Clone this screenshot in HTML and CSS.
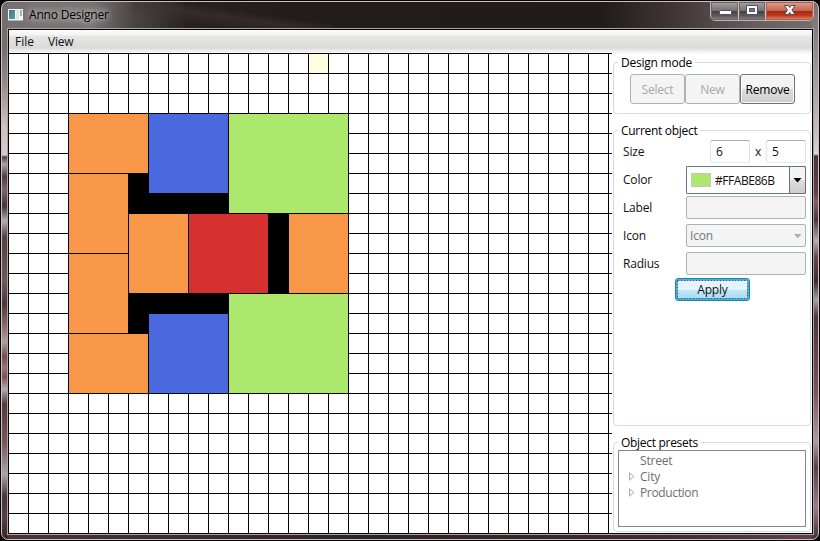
FILE: index.html
```html
<!DOCTYPE html>
<html lang="en">
<head>
<meta charset="utf-8">
<title>Anno Designer</title>
<link rel="stylesheet" href="styles.css">
</head>
<body>
<div class="window">
  <header class="titlebar">
    <svg class="app-icon" width="15" height="12" viewBox="0 0 15 12">
      <defs><linearGradient id="ic" x1="0" y1="0" x2="1" y2="1"><stop offset="0" stop-color="#4a6fa8"/><stop offset="1" stop-color="#4fa583"/></linearGradient></defs>
      <rect width="15" height="12" fill="#f4f6f6"/><rect x="1" y="1" width="6" height="9" fill="url(#ic)"/><rect x="8" y="1" width="3" height="9" fill="#dfe5e6"/><rect x="12" y="1" width="2" height="6" fill="#91bfae"/><path d="M0 11.5H15" stroke="#a8b3b8"/>
    </svg>
    <span class="title">Anno Designer</span>
    <div class="controls">
      <span class="ctl min"><svg width="28" height="18"><rect x="8.500" y="8.500" width="12" height="4" rx="1" fill="#fff" stroke="#4c5067"/></svg></span>
      <span class="ctl max"><svg width="26" height="18"><path fill-rule="evenodd" d="M7.500 3.500H18.500V12.500H7.500ZM10.500 6.500V9.500H15.500V6.500Z" fill="#fff" stroke="#4c5067"/></svg></span>
      <span class="ctl close"><svg width="47" height="18"><path d="M18.500 3.500H22.300L23.700 5.500L25.200 3.500H29L26 8L29 12.500H25.200L23.700 10.600L22.300 12.500H18.500L21.500 8Z" fill="#fff" stroke="#4c4a5c"/></svg></span>
    </div>
  </header>
  <div class="client">
    <nav class="menu"><span class="file">File</span><span class="view">View</span></nav>
    <main class="body">
      <svg class="canvas" width="604" height="480" viewBox="0 0 604 480" shape-rendering="crispEdges">
        <defs><pattern id="cells" width="20" height="20" patternUnits="userSpaceOnUse"><path d="M0 .5H20M.5 0V20" stroke="#000"/></pattern></defs>
        <rect width="604" height="480" fill="#fff"/>
        <rect x="300" width="20" height="20" fill="#ffffe0"/>
        <rect width="604" height="480" fill="url(#cells)"/>
        <path d="M120 120H140V140H220V160H120ZM260 160H280V240H260ZM120 240H220V260H140V280H120Z"/>
        <g stroke="#000" transform="translate(.5 .5)">
          <g fill="#f89748">
            <rect x="60" y="60" width="80" height="60"/><rect x="60" y="120" width="60" height="80"/><rect x="60" y="200" width="60" height="80"/><rect x="60" y="280" width="80" height="60"/><rect x="120" y="160" width="60" height="80"/><rect x="280" y="160" width="60" height="80"/>
          </g>
          <g fill="#4b69de"><rect x="140" y="60" width="80" height="80"/><rect x="140" y="260" width="80" height="80"/></g>
          <g fill="#abe86b"><rect x="220" y="60" width="120" height="100"/><rect x="220" y="240" width="120" height="100"/></g>
          <rect x="180" y="160" width="80" height="80" fill="#d63131"/>
        </g>
      </svg>
      <aside class="side">
        <fieldset class="mode"><legend>Design mode</legend>
          <div class="buttons"><button class="off" disabled>Select</button><button class="off" disabled>New</button><button class="on">Remove</button></div>
        </fieldset>
        <fieldset class="object"><legend>Current object</legend>
          <div class="rows">
            <div class="row"><label>Size</label><div class="size"><span class="field num">6</span><span class="times">x</span><span class="field num">5</span></div></div>
            <div class="row"><label>Color</label><div class="combo"><i class="swatch"></i><span class="hex">#FFABE86B</span><span class="drop"><svg width="15" height="26"><path d="M3.500 11H11.500L7.500 15.500Z"/></svg></span></div></div>
            <div class="row"><label>Label</label><span class="field off"></span></div>
            <div class="row"><label>Icon</label><span class="field off select"><span>Icon</span><svg width="8" height="5"><path d="M0 0H7.500L3.750 4.200Z" fill="#aaaeb2"/></svg></span></div>
            <div class="row"><label>Radius</label><span class="field off"></span></div>
          </div>
          <button class="apply"><svg class="focus" width="71" height="19"><rect x=".5" y=".5" width="70" height="18" fill="none" stroke="#4b5a62" stroke-dasharray="2 1"/></svg><span>Apply</span></button>
        </fieldset>
        <fieldset class="presets"><legend>Object presets</legend>
          <ul class="tree">
            <li><i></i><span class="street">Street</span></li>
            <li><i><svg width="6" height="9"><path d="M.5 .8V8.200L4.700 4.500Z" fill="#fff" stroke="#aaa"/></svg></i><span class="city">City</span></li>
            <li><i><svg width="6" height="9"><path d="M.5 .8V8.200L4.700 4.500Z" fill="#fff" stroke="#aaa"/></svg></i><span class="production">Production</span></li>
          </ul>
        </fieldset>
      </aside>
    </main>
  </div>
</div>
</body>
</html>
```
FILE: styles.css
```css
* { box-sizing: border-box; }
body { margin: 0; width: 820px; height: 541px; overflow: hidden; background: #080304; font: 12px/16px "Open Sans", "Noto Sans", sans-serif; color: #111; letter-spacing: -.2px; }
.window {
  width: 818px; height: 539px; margin: 1px; padding: 0 4px 4px 5px; border: 1px solid #c9c1c3; border-radius: 7px;
  background:
    linear-gradient(#736c6c 0, #756e6e 45px, #958784 80px, #d0c2bf 125px, #d5cbc8 153px, #583a3b 155px, #aaa3a4 162px, #543c3a 175px, #7a6669 188px, #493232 204px, #b2afb2 219px, #55403f 235px, #73585a 280px, #493839 302px, #88605e 320px, #aaa09b 340px, #754c50 355px, #a36f73 365px, #844f55 375px, #b4acae 387px, #543c3d 402px, #7c5458 440px, #aaa3ad 472px, #48343a 495px, #584047 515px, #302124 539px) left / 6px 100% no-repeat,
    linear-gradient(#756d6e 0, #999193 60px, #c7bdbe 130px, #ddd4d5 152px, #4c343a 154px, #633c45 190px, #8a5964 200px, #50343d 218px, #b4afb1 239px, #70424a 255px, #3f2c30 280px, #aaa0a4 298px, #53343d 315px, #7e505a 390px, #b09aa2 440px, #603b46 465px, #9d7a85 505px, #3e2a30 539px) right / 6px 100% no-repeat,
    linear-gradient(90deg, #4a343a, #2e2224 45%, #402a2d 80%, #634049) bottom / 100% 6px no-repeat,
    linear-gradient(8deg, transparent 25%, #40343788 46%, transparent 60%) 130px 0 / 200px 27px no-repeat,
    linear-gradient(90deg, #777171 0, #777171 90px, #4c4647 130px, #282122 185px, #231c1d 300px, #211b1c 600px, #3f3536 670px, #6a6061 760px, #766e70) top / 100% 27px no-repeat,
    #332527;
}
.titlebar { height: 26px; display: flex; padding-left: 1px; }
.app-icon { margin-top: 7px; }
.title { margin: 5px 0 0 6px; height: 16px; color: #000; letter-spacing: -.2px; text-shadow: 0 0 6px #ddd, 0 0 10px #ccc; }
.controls { display: flex; margin: -1px 0 0 auto; height: 20px; width: 104px; border: 1px solid #bbb3b5; border-radius: 0 0 5px 5px; overflow: hidden; }
.ctl { border-right: 1px solid #c5c1c3; background: linear-gradient(#aaa3a5, #777071 48%, #453f42 50%, #5c5659 75%, #898385); box-shadow: inset 0 0 0 1px #6d6668; }
.ctl svg { display: block; }
.min { width: 28px; }
.max { width: 27px; }
.close { flex: 1; border: 0; background: linear-gradient(#d9a18f, #c8664f 48%, #a62710 50%, #bb3b1e 75%, #e09270); box-shadow: inset 0 0 0 1px #b65e4b; }
.client { width: 807px; height: 507px; border: 1px solid #aaa3a3; box-shadow: inset 0 0 0 1px #000; background: #fff; padding: 1px; }
.menu { height: 24px; padding: 4px 0 0 6px; background: linear-gradient(#fbfcfa 0, #f4f4f3 5px, #e7e6e6 6px, #dadad9 18px, #e3e3e2 19px, #f3f3f3 22px, #fff); }
.menu span { display: inline-block; }
.file { width: 33px; letter-spacing: 0; }
.body { display: flex; height: 480px; margin-left: -1px; margin-top: -1px; }
.canvas { flex: none; }
.side { width: 200px; padding: 1px 1px 0; }
fieldset { min-width: 0; margin: 0; border: 1px solid #d0dce4; border-radius: 4px; padding: 0 4px; width: 198px; }
legend { height: 17px; padding: 0 3px; margin: 0; line-height: 17px; color: #000; letter-spacing: -.3px; }
.mode { height: 60px; }
.mode legend { letter-spacing: -.23px; }
.object { height: 304px; margin-top: 8px; }
.presets { height: 98px; margin-top: 8px; }
button { font: inherit; letter-spacing: inherit; padding: 0; margin: 0; border: 1px solid #707070; border-radius: 3px; }
.buttons { display: flex; width: 165px; margin: 3px 0 0 12px; }
.buttons button { width: 55px; height: 30px; padding-top: 2px; }
button.off { border-color: #adb2b5; background: #f4f4f4; color: #a8a8a8; }
button.on { color: #000; background: linear-gradient(#f3f3f3 0 50%, #dedede 51%, #cdcdcd); box-shadow: inset 0 0 0 1px #fafafa; }
.rows { margin-top: -1px; }
.row { display: flex; justify-content: space-between; height: 28px; padding-left: 5px; }
.row label { padding-top: 6px; }
.size { display: flex; }
.field { display: block; width: 120px; height: 23px; margin-top: 2px; border: 1px solid #adb2b5; border-radius: 2px; background: #f4f4f4; }
.field.num { width: 40px; padding: 3px 0 0 5px; border-color: #abadb3 #e2e3ea #e3e9ef #e2e3ea; background: #fff; }
.times { width: 16px; text-align: center; padding-top: 6px; }
.combo { display: flex; align-items: center; width: 120px; height: 28px; border: 1px solid #63798b; border-radius: 1px; padding-left: 4px; }
.swatch { width: 20px; height: 14px; background: #abe86b; border: 1px solid #c5c5c5; }
.hex { margin: 1px auto 0 4px; letter-spacing: -.45px; }
.drop { width: 17px; height: 28px; margin: -1px; border: 1px solid #707070; border-radius: 0 2px 2px 0; background: linear-gradient(#f4f4f4 50%, #dedede 51%, #cdcdcd); }
.field.select { display: flex; justify-content: space-between; padding: 3px 3px 0 3px; color: #777; }
.select svg { margin-top: 6px; }
.apply { position: relative; display: block; width: 75px; height: 23px; margin-left: 57px; border-color: #2c7fac; background: linear-gradient(#e5f4fc 50%, #c1e6f9 51%, #a6daf4); box-shadow: inset 0 0 0 1px #1fc1f0; padding: 1px; }
.focus { position: absolute; left: 1px; top: 1px; }
.apply span { display: block; line-height: 20px; color: #111; }
.tree { list-style: none; width: 188px; height: 77px; margin: -1px 0 0; border: 1px solid #828790; padding: 2px 0 0 8px; color: #6d6d6d; background: #fff; }
.tree li { height: 16px; display: flex; }
.tree i { width: 13px; padding: 3px 0 0 2px; line-height: 0; }
.production { letter-spacing: -.35px; }
```
